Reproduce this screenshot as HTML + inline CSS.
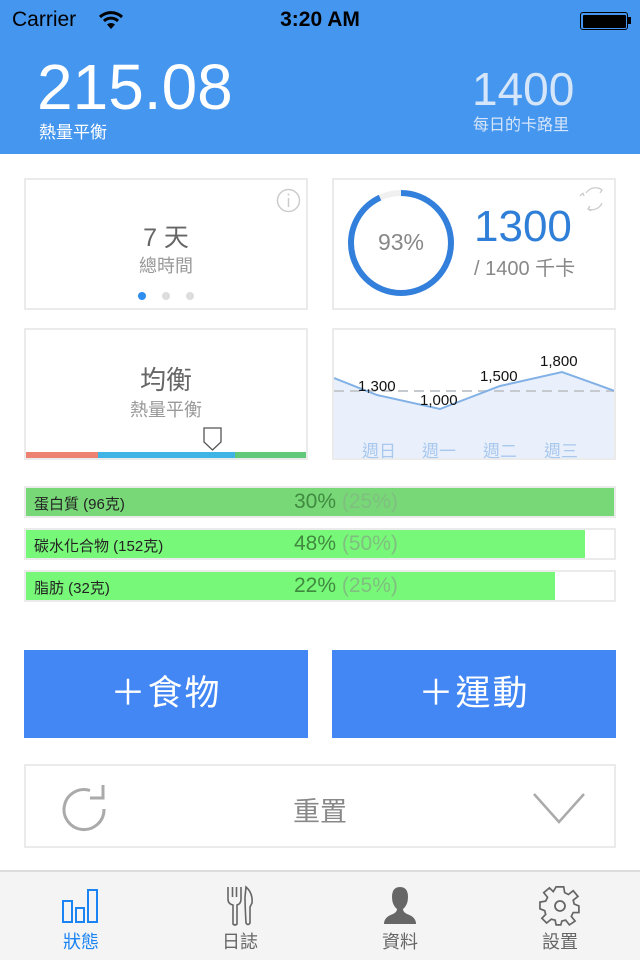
<!DOCTYPE html>
<html><head><meta charset="utf-8">
<style>
*{margin:0;padding:0;box-sizing:border-box}
body{width:640px;height:960px;position:relative;background:#fff;font-family:"Liberation Sans","Noto Sans CJK TC",sans-serif;overflow:hidden}
.a{position:absolute}
.card{position:absolute;border:2px solid #ebebeb;background:#fff}
.c{text-align:center}
.bar{position:absolute;left:24px;width:592px;height:32px;border:2px solid #ebebeb;background:#fff}
.bar .f{position:absolute;left:0;top:0;bottom:0;background:#78f878}
.bar .l{position:absolute;left:8px;top:5px;font-size:15px;color:#222}
.bar .p{position:absolute;left:268px;top:2px;font-size:21px;color:#3f8a3f}
.bar .p span{color:#7fbf7f}
.btn{position:absolute;top:650px;width:284px;height:88px;background:#4387f5;color:#fff;font-size:35px;text-align:center;line-height:88px;letter-spacing:2px}
.tab{position:absolute;top:928px;font-size:18px;color:#666;width:80px;text-align:center}
</style></head><body>
<div class="a" style="left:0;top:0;width:640px;height:154px;background:#4596ee"></div>
<div class="a" style="left:12px;top:8px;font-size:21px;color:#000">Carrier</div>
<svg class="a" style="left:98px;top:10px" width="26" height="20" viewBox="0 0 26 20"><path d="M2 7 A16 16 0 0 1 24 7" stroke="#000" stroke-width="3" fill="none"/><path d="M6 11 A10 10 0 0 1 20 11" stroke="#000" stroke-width="3" fill="none"/><path d="M13 19 L9 14.5 A6 6 0 0 1 17 14.5 Z" fill="#000"/></svg>
<div class="a" style="left:0;width:640px;top:8px;font-size:21px;font-weight:bold;text-align:center">3:20 AM</div>
<div class="a" style="left:580px;top:12px;width:48px;height:18px;border:1.5px solid #000;border-radius:3px;padding:1.5px"><div style="width:100%;height:100%;background:#000;border-radius:1px"></div></div>
<div class="a" style="left:628px;top:17px;width:3px;height:7px;background:#000"></div>
<div class="a" style="left:37px;top:50px;font-size:64px;color:#fff;font-weight:300;letter-spacing:0px">215.08</div>
<div class="a" style="left:39px;top:118px;font-size:17px;color:#fff">熱量平衡</div>
<div class="a" style="left:472px;top:62px;font-size:46px;color:#d6e6fa">1400</div>
<div class="a" style="left:473px;top:111px;font-size:16px;color:#d6e6fa">每日的卡路里</div>

<div class="card" style="left:24px;top:178px;width:284px;height:132px"></div>
<svg class="a" style="left:276px;top:188px" width="25" height="25"><circle cx="12.5" cy="12.5" r="11" fill="none" stroke="#ccc" stroke-width="1.5"/><line x1="12.5" y1="10" x2="12.5" y2="19" stroke="#ccc" stroke-width="1.5"/><circle cx="12.5" cy="6.5" r="1" fill="#ccc"/></svg>
<div class="a c" style="left:24px;width:284px;top:218px;font-size:25px;color:#666">7 天</div>
<div class="a c" style="left:24px;width:284px;top:252px;font-size:18px;color:#999">總時間</div>
<div class="a" style="left:138px;top:292px;width:8px;height:8px;border-radius:50%;background:#2d8ef0"></div>
<div class="a" style="left:162px;top:292px;width:8px;height:8px;border-radius:50%;background:#ddd"></div>
<div class="a" style="left:186px;top:292px;width:8px;height:8px;border-radius:50%;background:#ddd"></div>

<div class="card" style="left:332px;top:178px;width:284px;height:132px"></div>
<svg class="a" style="left:346px;top:188px" width="110" height="110"><circle cx="55" cy="55" r="50" fill="none" stroke="#f0f0f0" stroke-width="6"/><circle cx="55" cy="55" r="50" fill="none" stroke="#3280dc" stroke-width="6" stroke-dasharray="292 314" transform="rotate(-90 55 55)"/></svg>
<div class="a c" style="left:346px;width:110px;top:229px;font-size:23px;color:#888">93%</div>
<div class="a" style="left:474px;top:202px;font-size:44px;color:#2f7fd8">1300</div>
<div class="a" style="left:474px;top:252px;font-size:20px;color:#888">/ 1400 千卡</div>
<svg class="a" style="left:578px;top:184px" width="32" height="30" viewBox="0 0 32 30"><path d="M8 9 A11 11 0 0 1 24 6 M21 4 L24 6 L22 9 M24 19 A11 11 0 0 1 10 25 M13 27 L10 25 L12 22 M6 12 L5 9 M5 9 L2 12" stroke="#ccc" stroke-width="1.3" fill="none"/></svg>

<div class="card" style="left:24px;top:328px;width:284px;height:132px"></div>
<div class="a c" style="left:24px;width:284px;top:360px;font-size:26px;color:#666">均衡</div>
<div class="a c" style="left:24px;width:284px;top:396px;font-size:18px;color:#999">熱量平衡</div>
<div class="a" style="left:26px;top:452px;width:72px;height:6px;background:#ee8272"></div>
<div class="a" style="left:98px;top:452px;width:137px;height:6px;background:#40b4e4"></div>
<div class="a" style="left:235px;top:452px;width:71px;height:6px;background:#62c87a"></div>
<svg class="a" style="left:203px;top:427px" width="19" height="24"><path d="M1 1 H18 V15 L9.5 23 L1 15 Z" fill="#fff" stroke="#555" stroke-width="1.3"/></svg>

<div class="card" style="left:332px;top:328px;width:284px;height:132px"></div>
<svg class="a" style="left:334px;top:330px" width="280" height="128"><path d="M0 48 L43 65 L106 79 L166 56 L228 42 L281 61 V128 H0 Z" fill="#e9f0fb"/><line x1="0" y1="61" x2="280" y2="61" stroke="#c6c9ce" stroke-width="2" stroke-dasharray="10 6"/><path d="M0 48 L43 65 L106 79 L166 56 L228 42 L281 61" fill="none" stroke="#82b1e6" stroke-width="2"/></svg>
<div class="a" style="left:358px;top:378px;font-size:15px;color:#111">1,300</div>
<div class="a" style="left:420px;top:392px;font-size:15px;color:#111">1,000</div>
<div class="a" style="left:480px;top:368px;font-size:15px;color:#111">1,500</div>
<div class="a" style="left:540px;top:353px;font-size:15px;color:#111">1,800</div>
<div class="a" style="left:362px;top:437px;font-size:17px;color:#a9c8ee">週日</div>
<div class="a" style="left:422px;top:437px;font-size:17px;color:#a9c8ee">週一</div>
<div class="a" style="left:483px;top:437px;font-size:17px;color:#a9c8ee">週二</div>
<div class="a" style="left:544px;top:437px;font-size:17px;color:#a9c8ee">週三</div>

<div class="bar" style="top:486px"><div class="f" style="width:588px;background:#78d878"></div><div class="l">蛋白質 (96克)</div><div class="p">30% <span>(25%)</span></div></div>
<div class="bar" style="top:528px"><div class="f" style="width:559px"></div><div class="l">碳水化合物 (152克)</div><div class="p">48% <span>(50%)</span></div></div>
<div class="bar" style="top:570px"><div class="f" style="width:529px"></div><div class="l">脂肪 (32克)</div><div class="p">22% <span>(25%)</span></div></div>

<div class="btn" style="left:24px">＋食物</div>
<div class="btn" style="left:332px">＋運動</div>

<div class="card" style="left:24px;top:764px;width:592px;height:84px"></div>
<svg class="a" style="left:62px;top:783px" width="48" height="50" viewBox="0 0 48 50"><path d="M42 26 A20 20 0 1 1 28 7.5" fill="none" stroke="#aaa" stroke-width="3"/><path d="M41 2 V15 H28" fill="none" stroke="#aaa" stroke-width="3"/></svg>
<div class="a c" style="left:24px;width:592px;top:790px;font-size:27px;color:#888">重置</div>
<svg class="a" style="left:532px;top:790px" width="54" height="36"><path d="M2 4 L27 32 L52 4" fill="none" stroke="#aaa" stroke-width="2.5"/></svg>

<div class="a" style="left:0;top:870px;width:640px;height:90px;background:#f4f4f4;border-top:2px solid #dcdcdc"></div>
<svg class="a" style="left:62px;top:887px" width="38" height="38"><rect x="1" y="14" width="9" height="21" fill="none" stroke="#1a84f4" stroke-width="2"/><rect x="14" y="21" width="8" height="14" fill="none" stroke="#1a84f4" stroke-width="2"/><rect x="26" y="3" width="9" height="32" fill="none" stroke="#1a84f4" stroke-width="2"/></svg>
<svg class="a" style="left:226px;top:885px" width="28" height="42" viewBox="0 0 28 42"><path d="M2 2 V14 Q2 19 7 20 V39 Q9 41 11 39 V20 Q15 19 15 14 V2 M6.5 2 V12 M10.5 2 V12" fill="none" stroke="#666" stroke-width="1.6"/><path d="M20 2 Q27 8 26 18 L24 22 V38 Q22 41 20 38 Q19 20 19 12 Z" fill="none" stroke="#666" stroke-width="1.6"/></svg>
<svg class="a" style="left:383px;top:886px" width="34" height="38" viewBox="0 0 34 38"><path d="M17 1 Q25 1 25 11 Q25 19 20 23 Q20 26 24 28 Q33 31 33 38 H1 Q1 31 10 28 Q14 26 14 23 Q9 19 9 11 Q9 1 17 1 Z" fill="#666"/></svg>
<svg class="a" style="left:539px;top:885px" width="42" height="42" viewBox="0 0 42 42"><g fill="none" stroke="#666" stroke-width="1.8"><path d="M17 2 H25 L26 8 L30 10 L35 6 L40 12 L35 16 L36 20 L41 22 V29 L35 29 L33 33 L37 38 L31 42 L27 37 L23 38 L22 42 H17 L16 37 L12 36 L7 40 L2 35 L6 31 L5 27 L0 25 V18 L6 17 L8 13 L4 8 L10 3 L14 7 Z" transform="scale(0.95) translate(1 0)"/><circle cx="21" cy="21" r="5"/></g></svg>
<div class="tab" style="left:41px;color:#1a84f4">狀態</div>
<div class="tab" style="left:200px">日誌</div>
<div class="tab" style="left:360px">資料</div>
<div class="tab" style="left:520px">設置</div>
</body></html>
